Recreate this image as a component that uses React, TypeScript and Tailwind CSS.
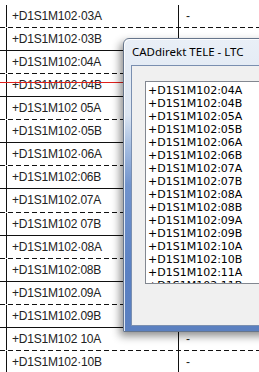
const rows = [
  { code: '+D1S1M102·03A', dash: true, mark: true },
  { code: '+D1S1M102·03B', dash: false, mark: false },
  { code: '+D1S1M102:04A', dash: true, mark: false },
  { code: '+D1S1M102·04B', dash: false, mark: false },
  { code: '+D1S1M102 05A', dash: true, mark: false },
  { code: '+D1S1M102·05B', dash: false, mark: false },
  { code: '+D1S1M102·06A', dash: true, mark: false },
  { code: '+D1S1M102:06B', dash: false, mark: false },
  { code: '+D1S1M102.07A', dash: true, mark: false },
  { code: '+D1S1M102 07B', dash: false, mark: false },
  { code: '+D1S1M102·08A', dash: true, mark: false },
  { code: '+D1S1M102:08B', dash: false, mark: false },
  { code: '+D1S1M102.09A', dash: true, mark: false },
  { code: '+D1S1M102.09B', dash: false, mark: false },
  { code: '+D1S1M102 10A', dash: true, mark: true },
  { code: '+D1S1M102·10B', dash: false, mark: true },
];

const listItems = [
  '04A', '04B', '05A', '05B', '06A', '06B', '07A', '07B',
  '08A', '08B', '09A', '09B', '10A', '10B', '11A', '11B',
];

export default function App() {
  return (
    <div className="relative h-[372px] w-[259px] overflow-hidden bg-white font-['Liberation_Sans',Arial,sans-serif] text-[12px] text-[#222]">
      {/* drawing table */}
      {rows.map((row, i) => (
        <div key={row.code}>
          <div className={`flex ${i === 0 ? 'h-[27px] pt-[5px]' : 'h-[22.07px]'}`}>
            <div className="w-[6px]" />
            <div className="flex w-[172px] items-center border-l border-[#111] pl-[5px] tracking-[-0.2px]">
              {row.code}
            </div>
            <div className="flex flex-1 items-center border-l border-[#111] pl-[7px]">{row.mark ? '-' : ''}</div>
          </div>
          {row.dash ? (
            <div className="h-px bg-[repeating-linear-gradient(to_right,#111_0_5px,transparent_5px_8px)]" />
          ) : (
            <div className="h-px bg-[#111]" />
          )}
        </div>
      ))}

      {/* red marker line */}
      <div className="absolute left-0 top-[82px] h-px w-[130px] bg-[#e0201c]" />

      {/* dialog */}
      <div className="absolute left-[123px] top-[38px] h-[294px] w-[160px] rounded-t-[6px] border border-[#66758b] bg-[linear-gradient(to_bottom,#e9eff7_0%,#dce5f1_26%,#a9c0e2_36%,#7193cc_50%,#5a80c2_80%,#5b80c0_100%)] shadow-[inset_1px_1px_0_#ffffffcc,-3px_4px_8px_rgba(0,0,0,0.45)]">
        <div className="flex h-[26px] items-center pl-[8px] font-['Noto_Sans',sans-serif] text-[11.5px] text-black">
          CADdirekt TELE - LTC
        </div>
        <div className="ml-[7px] h-[261px] border border-[#7a8fb0] bg-[#f0f0f0] pl-[13px] pt-[15px]">
          <div className="h-[203px] w-[200px] overflow-hidden border border-[#828790] bg-white pl-[2px] pt-[2px] font-['DejaVu_Sans',Verdana,sans-serif] text-[11px] leading-[13px] text-black">
            {listItems.map((item) => (
              <div key={item}>+D1S1M102:{item}</div>
            ))}
          </div>
        </div>
      </div>
    </div>
  );
}
